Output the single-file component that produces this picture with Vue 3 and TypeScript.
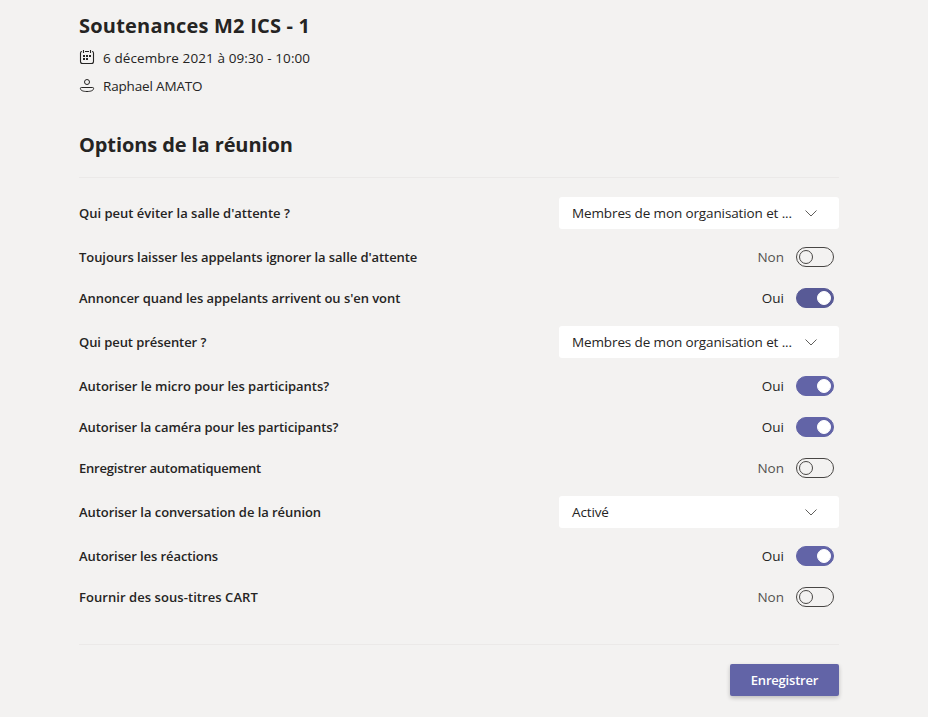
<script setup lang="ts">
interface Option {
  label: string
  kind: 'select' | 'toggle'
  value?: string
  on?: boolean
  active?: boolean
  tracking: number
}

const options: Option[] = [
  { label: "Qui peut éviter la salle d'attente ?", kind: 'select', value: 'Membres de mon organisation et ...', tracking: 0 },
  { label: "Toujours laisser les appelants ignorer la salle d'attente", kind: 'toggle', on: false, tracking: -0.065 },
  { label: "Annoncer quand les appelants arrivent ou s'en vont", kind: 'toggle', on: true, active: true, tracking: -0.06 },
  { label: 'Qui peut présenter ?', kind: 'select', value: 'Membres de mon organisation et ...', tracking: -0.07 },
  { label: 'Autoriser le micro pour les participants?', kind: 'toggle', on: true, tracking: -0.03 },
  { label: 'Autoriser la caméra pour les participants?', kind: 'toggle', on: true, tracking: -0.07 },
  { label: 'Enregistrer automatiquement', kind: 'toggle', on: false, tracking: -0.21 },
  { label: 'Autoriser la conversation de la réunion', kind: 'select', value: 'Activé', tracking: -0.06 },
  { label: 'Autoriser les réactions', kind: 'toggle', on: true, tracking: -0.09 },
  { label: 'Fournir des sous-titres CART', kind: 'toggle', on: false, tracking: 0.06 },
]
</script>

<template>
  <main class="page">
    <h1 class="title">Soutenances M2 ICS - 1</h1>
    <div class="meta date">
      <svg class="icon" width="16" height="16" viewBox="0 0 16 16" fill="none" stroke="#252423">
        <path d="M3 2.5Q1.5 2.5 1.5 4v8.500q0 2 2 2h9q2 0 2-2V4q0-1.500-1.500-1.500M6 2.500h4M4.500 1v3M11.500 1v3" stroke-width="1.100" />
        <path d="M4 7h2M7 7h2M10 7h2M4 10h2M7 10h2" stroke-width="2" />
      </svg>
      <span>6 décembre 2021 à 09:30 - 10:00</span>
    </div>
    <div class="meta person">
      <svg class="icon" width="16" height="16" viewBox="0 0 16 16" fill="none" stroke="#252423">
        <circle cx="8" cy="4" r="2.500" />
        <path d="M2.300 9.500h11.400q.9 0 .9.900c0 2.200-3 3.100-6.600 3.100s-6.600-.9-6.600-3.100q0-.9.900-.9z" />
      </svg>
      <span>Raphael AMATO</span>
    </div>
    <h2 class="heading">Options de la réunion</h2>

    <section class="options">
      <div v-for="o in options" :key="o.label" class="row" :class="o.kind">
        <span class="label" :style="{ letterSpacing: o.tracking + 'px' }">{{ o.label }}</span>
        <button v-if="o.kind === 'select'" class="dropdown" type="button">
          <span>{{ o.value }}</span>
          <svg width="12" height="8" viewBox="0 0 12 8" fill="none" stroke="#605e5c">
            <path d="M0.5 1.500L6 7L11.5 1.500" />
          </svg>
        </button>
        <div v-else class="switch" :class="{ on: o.on, active: o.active }">
          <span class="state">{{ o.on ? 'Oui' : 'Non' }}</span>
          <span class="track"><span class="thumb"></span></span>
        </div>
      </div>
    </section>

    <footer class="footer">
      <button class="save" type="button">Enregistrer</button>
    </footer>
  </main>
</template>

<style>
body {
  background: #f3f2f1;
}
</style>

<style scoped>
.page {
  box-sizing: border-box;
  width: 760px;
  height: 717px;
  margin-left: 79px;
  padding-top: 10px;
  color: #252423;
  font-family: "Open Sans", "Noto Sans", sans-serif;
  font-size: 13.5px;
}
.title,
.heading {
  margin: 0;
  height: 32px;
  font-size: 20px;
  line-height: 32px;
  font-weight: 700;
  white-space: nowrap;
}
.title {
  letter-spacing: 0.2px;
}
.meta {
  display: flex;
  align-items: center;
  gap: 8px;
  height: 28px;
  line-height: 28px;
}
.date {
  margin-top: 2px;
  letter-spacing: 0.1px;
}
.date .icon {
  margin-top: -2px;
}
.person {
  letter-spacing: -0.16px;
}
.heading {
  margin-top: 29px;
  letter-spacing: -0.1px;
}
.options {
  margin-top: 16px;
  padding: 12px 0 26px;
  border-top: 1px solid #ebe9e8;
  border-bottom: 1px solid #ebe9e8;
}
.row {
  display: flex;
  justify-content: space-between;
  align-items: center;
  box-sizing: border-box;
}
.row.select {
  height: 47px;
  padding: 7px 0 8px;
}
.row.toggle {
  height: 41px;
  padding: 10px 5px 11px 0;
}
.label {
  font-weight: 600;
  font-size: 13px;
  line-height: 20px;
  white-space: nowrap;
}
.dropdown {
  display: flex;
  align-items: center;
  justify-content: space-between;
  box-sizing: border-box;
  width: 280px;
  height: 32px;
  padding: 0 22px 0 13px;
  border: 0;
  border-radius: 3px;
  background: #fff;
  color: #252423;
  font: inherit;
  letter-spacing: -0.12px;
  white-space: nowrap;
}
.switch {
  display: flex;
  align-items: center;
  gap: 12px;
}
.state {
  color: #55534f;
  line-height: 20px;
}
.on .state {
  color: #252423;
}
.track {
  display: flex;
  align-items: center;
  box-sizing: border-box;
  width: 38px;
  height: 20px;
  padding: 0 2px;
  border: 1px solid #484644;
  border-radius: 10px;
}
.thumb {
  box-sizing: border-box;
  width: 14px;
  height: 14px;
  border: 1px solid #484644;
  border-radius: 50%;
}
.on .track {
  justify-content: flex-end;
  border-color: #6264a7;
  background: #6264a7;
}
.on.active .track {
  border-color: #585a96;
  background: #585a96;
}
.on .thumb {
  border-color: #fff;
  background: #fff;
}
.footer {
  display: flex;
  justify-content: flex-end;
  padding-top: 19px;
}
.save {
  width: 109px;
  height: 32px;
  padding: 0;
  border: 0;
  border-radius: 2px;
  background: #6264a7;
  box-shadow: 0 2px 4px rgba(0, 0, 0, 0.22);
  color: #fff;
  font: inherit;
  font-size: 13px;
  font-weight: 600;
  letter-spacing: -0.2px;
}
</style>
